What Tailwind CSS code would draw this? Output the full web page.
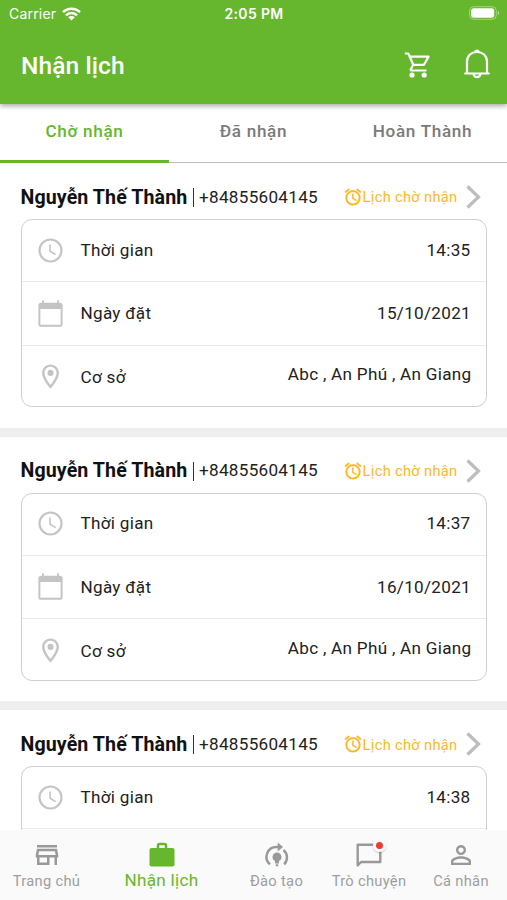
<!DOCTYPE html>
<html lang="vi">
<head>
<meta charset="utf-8">
<title>Nhận lịch</title>
<script src="https://cdn.jsdelivr.net/npm/@tailwindcss/browser@4"></script>
</head>
<body class="bg-white">
<svg class="hidden">
  <symbol id="alarm" viewBox="0 0 24 24"><path d="M22 5.72l-4.6-3.86-1.29 1.53 4.6 3.86L22 5.72zM7.88 3.39L6.6 1.86 2 5.71l1.29 1.53 4.59-3.85zM12.5 8H11v6l4.75 2.85.75-1.23-4-2.37V8zM12 4a9 9 0 100 18 9 9 0 000-18zm0 16c-3.87 0-7-3.13-7-7s3.13-7 7-7 7 3.13 7 7-3.13 7-7 7z"/></symbol>
  <symbol id="clock" viewBox="0 0 24 24"><path d="M12 2a10 10 0 100 20 10 10 0 000-20zm0 18.2a8.2 8.2 0 110-16.400 8.200 8.200 0 010 16.400zM12.300 7H11v6l4.900 2.900.7-1.100-4.300-2.500z"/></symbol>
  <symbol id="calendar" viewBox="0 0 24 24"><path d="M20 3h-1V1h-1.500v2H6.500V1H5v2H4c-1.100 0-2 .9-2 2v16c0 1.100.9 2 2 2h16c1.100 0 2-.9 2-2V5c0-1.100-.9-2-2-2zm.4 18.400H3.600V8.300h16.800v13.100z"/></symbol>
  <symbol id="pin" viewBox="0 0 24 24"><path d="M12 2C8.130 2 5 5.130 5 9c0 5.250 7 13 7 13s7-7.750 7-13c0-3.870-3.130-7-7-7zM7 9c0-2.760 2.240-5 5-5s5 2.240 5 5c0 2.880-2.880 7.190-5 9.880C9.920 16.210 7 11.850 7 9z"/><circle cx="12" cy="9" r="2.500"/></symbol>
</svg>
<div class="flex h-[900px] w-[507px] flex-col overflow-hidden bg-white font-[Roboto,sans-serif] text-[17.1px] tracking-[0.3px] text-[#212121]">
  <header class="relative z-10 h-[103.500px] shrink-0 bg-[#66b72d] text-white shadow-[0_2px_5px_rgba(0,0,0,0.35)]">
    <div class="grid h-[27px] grid-cols-3 items-center pr-[7px] pl-[9px] font-[Inter,sans-serif] text-[14px]">
      <div class="flex items-center gap-[6px]">
        <span class="tracking-[0.2px]">Carrier</span>
        <svg class="h-[14px] w-[19px]" viewBox="0 0 19 14" fill="none" stroke="#fff" stroke-width="2.500"><path d="M1 5.200a12 12 0 0117 0M4 8.400a7.700 7.700 0 0111 0"/><path d="M9.500 13.500L6.200 10.300a4.600 4.600 0 016.600 0z" fill="#fff" stroke="none"/></svg>
      </div>
      <span class="pr-px text-center text-[14px] font-semibold tracking-[0.35px] whitespace-nowrap">2:05 PM</span>
      <svg class="-mt-px h-[14px] w-[31px] justify-self-end" viewBox="0 0 31 14"><rect x=".7" y=".7" width="26.600" height="12.600" rx="4" fill="none" stroke="#fff" stroke-opacity=".4"/><rect x="2.200" y="2.200" width="23" height="9.600" rx="2.500" fill="#fff"/><path d="M28.800 5v4q1.500-.6 1.500-2t-1.500-2z" fill="#fff" fill-opacity=".5"/></svg>
    </div>
    <div class="flex h-[77px] items-center pr-[16px] pl-[21px]">
      <h1 class="grow pt-px text-[24.500px] font-medium tracking-[0.1px]">Nhận lịch</h1>
      <svg class="mr-[30px] h-[30px] w-[30px]" viewBox="0 0 30 30" fill="none" stroke="#fff" stroke-width="2.200" stroke-linejoin="round"><path d="M1.800 2.500h3.500L10.300 13.800H21L25.600 5.600H6.800M10.300 13.800L7.700 18.200q-.5 1.300 1 1.300H23.500"/><circle cx="9" cy="24" r="2.600" fill="#fff" stroke="none"/><circle cx="21.200" cy="24" r="2.600" fill="#fff" stroke="none"/></svg>
      <svg class="-mt-[3px] h-[30px] w-[28px]" viewBox="0 0 28 30" fill="none" stroke="#fff" stroke-width="2.200" stroke-linecap="round" stroke-linejoin="round"><path d="M2.200 24.500h23.600M4 24.500V13C4 6.500 8.400 3 14 3S24 6.500 24 13v11.500M12.500 2.300q1.500-1.200 3 0M10.500 25.300a3.600 3.600 0 007 0"/></svg>
    </div>
  </header>
  <nav class="grid h-[59.500px] shrink-0 grid-cols-3 border-b border-[#bdbdbd] text-center font-medium tracking-[0.7px] text-[#7a7a7a]">
    <div class="-mb-px flex items-center justify-center border-b-[3px] border-[#66b72d] text-[#66b72d]"><span>Chờ nhận</span></div>
    <div class="flex items-center justify-center pb-[1.500px]">Đã nhận</div>
    <div class="flex items-center justify-center pb-[1.500px]">Hoàn Thành</div>
  </nav>
  <main id="list" class="min-h-0 grow overflow-hidden"></main>
  <template id="booking">
    <section class="h-[273.700px] border-b-[9px] border-[#eeeeee] px-[20.500px]">
      <div class="flex h-[56px] items-center pt-[13px] whitespace-nowrap">
        <span class="w-[167px] text-[19.600px] font-bold tracking-[0.1px] text-[#111]">Nguyễn Thế Thành</span>
        <span class="mr-[5.500px] ml-[5px] h-[19px] w-px bg-[#333]"></span>
        <span class="grow">+84855604145</span>
        <svg class="-mt-px h-[20px] w-[20px] fill-[#fbb829] stroke-[#fbb829] stroke-[0.4]"><use href="#alarm"/></svg>
        <span class="text-[14.700px] tracking-[0.3px] text-[#fbb829]">Lịch chờ nhận</span>
        <svg class="-mt-px mr-[6px] ml-[8px] h-[24px] w-[15px]" viewBox="0 0 15 24" fill="none" stroke="#bdbdbd" stroke-width="3.200"><path d="M1.500 1.500L12.500 12 1.500 22.500"/></svg>
      </div>
      <div class="grid h-[188px] grid-rows-[62px_63.500px_1fr] rounded-[11px] border-[1.500px] border-[#cfcfcf] text-[#212121]">
        <div class="flex items-center border-b border-[#eaeaea] pr-[15px] pl-[14.500px]"><svg class="-mt-px mr-[15.500px] h-[29px] w-[29px] fill-[#c4c4c6]"><use href="#clock"/></svg><span class="grow">Thời gian</span><span data-time></span></div>
        <div data-extra class="flex items-center border-b border-[#eaeaea] pr-[14.500px] pl-[14.500px]"><svg class="mr-[15.500px] h-[29px] w-[29px] fill-[#c4c4c6]"><use href="#calendar"/></svg><span class="grow pt-[2px]">Ngày đặt</span><span data-date class="pt-[2px]"></span></div>
        <div data-extra class="flex items-center pt-[2px] pr-[14px] pl-[14.500px]"><svg class="mr-[15.500px] h-[29px] w-[29px] fill-[#c4c4c6]"><use href="#pin"/></svg><span class="grow pt-[2px]">Cơ sở</span><span class="pb-[3px]">Abc , An Phú , An Giang</span></div>
      </div>
    </section>
  </template>
  <footer class="grid h-[70px] shrink-0 grid-cols-[93px_137px_93px_92px_92px] bg-[#fafafa] text-center text-[14.700px] tracking-[0.3px] whitespace-nowrap text-[#9e9e9e]">
    <div class="flex flex-col items-center pt-[10px]"><svg class="h-[30px] w-[30px]" viewBox="0 0 24 24" fill="#999"><path d="M18.360 9l.6 3H5.040l.6-3h12.720M20 4H4v2h16V4zm0 3H4l-1 5v2h1v6h10v-6h4v6h2v-6h1v-2l-1-5zM6 18v-4h6v4H6z"/></svg><span>Trang chủ</span></div>
    <div class="flex flex-col items-center pt-[11px] text-[17.100px] tracking-[0.3px] text-[#66b72d]"><svg class="h-[28px] w-[30px]" viewBox="0 0 30 28" fill="none" stroke="#66b72d"><rect x="2.500" y="7" width="25" height="18.500" rx="2" fill="#66b72d" stroke="none"/><path d="M11 8V4.500q0-1.500 1.500-1.500h5Q19 3 19 4.500V8" stroke-width="2.500"/></svg><span class="-mt-[1.500px]">Nhận lịch</span></div>
    <div class="flex flex-col items-center pt-[11px]"><svg class="h-[29px] w-[28px]" viewBox="0 0 28 29" fill="none" stroke="#999" stroke-width="2.400"><path d="M7 23.300A9.800 9.800 0 0113.500 6h2M20.500 9A9.800 9.800 0 0121.200 23.300"/><path d="M14.700 1.500l5.300 4.500-5.300 4.500z" fill="#999" stroke="none"/><path d="M14 11.500a4.500 4.500 0 00-2 8.500v2.500h4V20a4.500 4.500 0 00-2-8.500zM12.800 23.300h2.400v2h-2.400z" fill="#999" stroke="none"/></svg><span>Đào tạo</span></div>
    <div class="flex flex-col items-center pt-[10px]"><div class="relative h-[30px] w-[30px]"><svg class="h-[29px] w-[30px]" viewBox="0 0 30 29" fill="none" stroke="#999" stroke-width="2.400"><path d="M3.700 25.500V4.700h22.600v17.300H7z" stroke-linejoin="round"/></svg><span class="absolute top-[-1.500px] right-[-2px] h-[13px] w-[13px] rounded-full border-[3px] border-white bg-[#f03a2e] shadow-[0_1px_2px_rgba(0,0,0,0.2)]"></span></div><span>Trò chuyện</span></div>
    <div class="flex flex-col items-center pt-[10px]"><svg class="h-[30px] w-[30px]" viewBox="0 0 24 24" fill="#999"><path d="M12 5.900c1.160 0 2.100.94 2.100 2.100s-.94 2.100-2.100 2.100S9.900 9.160 9.900 8s.94-2.100 2.100-2.100m0 9c2.970 0 6.100 1.460 6.100 2.100v1.100H5.900V17c0-.64 3.130-2.100 6.100-2.100M12 4C9.790 4 8 5.790 8 8s1.790 4 4 4 4-1.790 4-4-1.790-4-4-4zm0 9c-2.670 0-8 1.340-8 4v3h16v-3c0-2.660-5.330-4-8-4z"/></svg><span>Cá nhân</span></div>
  </footer>
</div>
<script>
const bookings = [['14:35', '15/10/2021'], ['14:37', '16/10/2021'], ['14:38', null]];
const list = document.getElementById('list');
const template = document.getElementById('booking');
for (const [time, date] of bookings) {
  const item = template.content.cloneNode(true);
  item.querySelector('[data-time]').textContent = time;
  if (date) item.querySelector('[data-date]').textContent = date;
  else item.querySelectorAll('[data-extra]').forEach((row) => row.remove());
  list.append(item);
}
</script>
</body>
</html>
